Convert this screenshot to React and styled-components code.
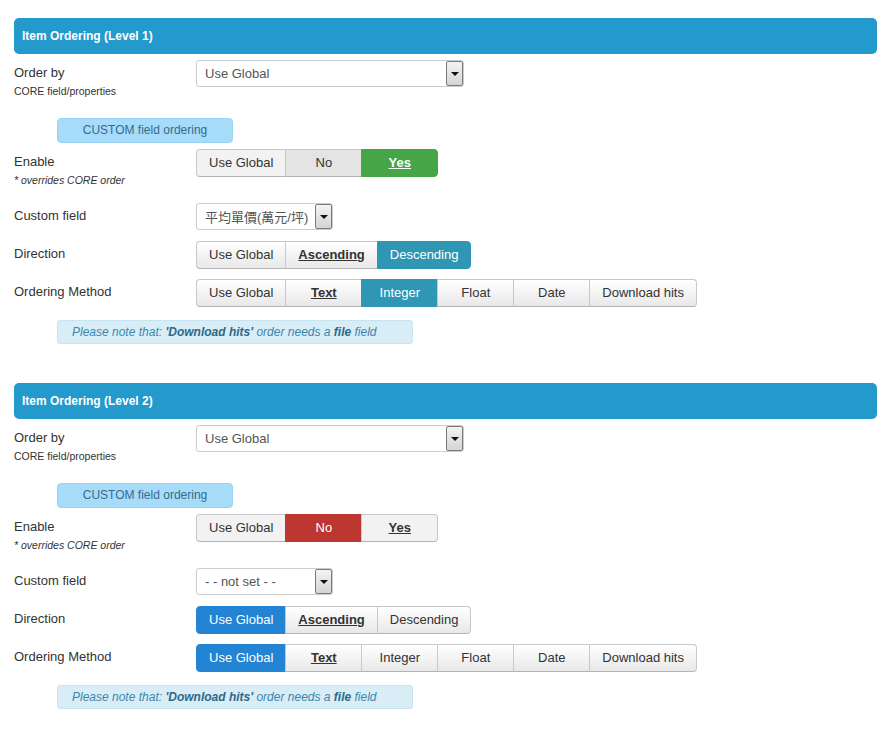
import styled, { createGlobalStyle } from "styled-components";

const GlobalStyle = createGlobalStyle`
  body {
    margin: 0;
    background: #fff;
    font-family: "Liberation Sans", Arial, sans-serif;
    color: #333;
  }
`;

const levels = [
  {
    title: "Item Ordering (Level 1)",
    enable: { active: "Yes", kind: "success", soft: "No" },
    customField: "平均單價(萬元/坪)",
    direction: { active: "Descending", kind: "info" },
    method: { active: "Integer", kind: "info" },
  },
  {
    title: "Item Ordering (Level 2)",
    enable: { active: "No", kind: "danger" },
    customField: "- - not set - -",
    direction: { active: "Use Global", kind: "primary" },
    method: { active: "Use Global", kind: "primary" },
  },
];

const activeColors = {
  success: "#46a546",
  danger: "#bd362f",
  info: "#2f96b4",
  primary: "#2384d3",
};

function ButtonGroup({ options, active, kind, flat, soft, bold = [] }) {
  return (
    <Group>
      {options.map((opt) => (
        <GroupButton
          key={opt}
          $active={opt === active ? activeColors[kind] : null}
          $flat={flat}
          $soft={opt === soft}
          $bold={bold.includes(opt)}
        >
          {opt}
        </GroupButton>
      ))}
    </Group>
  );
}

function Select({ value, width }) {
  return (
    <SelectBox $width={width}>
      <span>{value}</span>
      <Arrow />
    </SelectBox>
  );
}

function Section({ level }) {
  return (
    <Fieldset>
      <Header>{level.title}</Header>

      <Row $gap={20}>
        <Label>
          <LabelText>Order by</LabelText>
          <SubText>CORE field/properties</SubText>
        </Label>
        <Select value="Use Global" width={268} />
      </Row>

      <Badge>CUSTOM field ordering</Badge>

      <Row $gap={16}>
        <Label>
          <LabelText>Enable</LabelText>
          <SubText $italic>* overrides CORE order</SubText>
        </Label>
        <ButtonGroup
          options={["Use Global", "No", "Yes"]}
          active={level.enable.active}
          kind={level.enable.kind}
          soft={level.enable.soft}
          bold={["Yes"]}
          flat
        />
      </Row>

      <Row $gap={11}>
        <Label>
          <LabelText>Custom field</LabelText>
        </Label>
        <Select value={level.customField} width={137} />
      </Row>

      <Row $gap={10}>
        <Label>
          <LabelText>Direction</LabelText>
        </Label>
        <ButtonGroup
          options={["Use Global", "Ascending", "Descending"]}
          active={level.direction.active}
          kind={level.direction.kind}
          bold={["Ascending"]}
        />
      </Row>

      <Row $gap={13}>
        <Label>
          <LabelText>Ordering Method</LabelText>
        </Label>
        <ButtonGroup
          options={["Use Global", "Text", "Integer", "Float", "Date", "Download hits"]}
          active={level.method.active}
          kind={level.method.kind}
          bold={["Text"]}
        />
      </Row>

      <Note>
        Please note that: <b>'Download hits'</b> order needs a <b>file</b> field
      </Note>
    </Fieldset>
  );
}

export default function App() {
  return (
    <>
      <GlobalStyle />
      <Page>
        {levels.map((level) => (
          <Section key={level.title} level={level} />
        ))}
      </Page>
    </>
  );
}

const Page = styled.div`
  padding: 18px 5px 0 14px;
  display: flex;
  flex-direction: column;
  gap: 39px;
`;

const Fieldset = styled.section`
  display: flex;
  flex-direction: column;
`;

const Header = styled.div`
  height: 36px;
  background: #2399cc;
  border-radius: 5px;
  color: #fff;
  font-weight: bold;
  font-size: 12px;
  line-height: 36px;
  padding-left: 8px;
  margin-bottom: 6px;
`;

const Row = styled.div`
  display: flex;
  align-items: flex-start;
  margin-bottom: ${(p) => p.$gap}px;
`;

const Label = styled.div`
  width: 182px;
  flex: none;
  padding-top: 4px;
`;

const LabelText = styled.div`
  font-size: 13px;
  line-height: 18px;
  color: #333;
`;

const SubText = styled.div`
  font-size: 10.5px;
  line-height: 14px;
  margin-top: 2px;
  color: #333;
  font-style: ${(p) => (p.$italic ? "italic" : "normal")};
`;

const SelectBox = styled.div`
  box-sizing: border-box;
  width: ${(p) => p.$width}px;
  height: 27px;
  border: 1px solid #ccc;
  border-radius: 3px;
  background: #fff;
  display: flex;
  align-items: center;
  justify-content: space-between;
  padding-left: 8px;
  font-size: 13px;
  color: #555;
  font-family: "Liberation Sans", Arial, "Noto Sans CJK TC", sans-serif;

  span {
    white-space: nowrap;
    overflow: hidden;
  }
`;

const Arrow = styled.div`
  box-sizing: border-box;
  flex: none;
  width: 17px;
  height: 25px;
  border: 1px solid #7a7a7a;
  border-radius: 2px;
  background: linear-gradient(#f4f4f4, #d4d4d4);
  position: relative;

  &::after {
    content: "";
    position: absolute;
    left: 4px;
    top: 10px;
    border-left: 4px solid transparent;
    border-right: 4px solid transparent;
    border-top: 4px solid #111;
  }
`;

const Badge = styled.div`
  box-sizing: border-box;
  width: 176px;
  height: 25px;
  margin-left: 43px;
  margin-bottom: 6px;
  background: #a6dcf9;
  border: 1px solid #9ad3f2;
  border-radius: 4px;
  color: #356b8e;
  font-size: 12px;
  line-height: 23px;
  text-align: center;
`;

const Group = styled.div`
  display: flex;
`;

const GroupButton = styled.div`
  box-sizing: border-box;
  min-width: 77px;
  height: 28px;
  padding: 0 12px;
  font-size: 13px;
  line-height: 26px;
  text-align: center;
  white-space: nowrap;
  font-weight: ${(p) => (p.$bold ? "bold" : "normal")};
  text-decoration: ${(p) => (p.$bold ? "underline" : "none")};
  border: 1px solid ${(p) => (p.$active ? p.$active : "#c8c8c8")};
  border-bottom-color: ${(p) => (p.$active ? p.$active : "#b3b3b3")};
  margin-left: -1px;
  color: ${(p) => (p.$active ? "#fff" : "#333")};
  background: ${(p) =>
    p.$active
      ? p.$active
      : p.$soft
      ? "#e4e4e4"
      : p.$flat
      ? "#f2f2f2"
      : "linear-gradient(#ffffff, #e8e8e8)"};

  &:first-child {
    margin-left: 0;
    border-radius: 4px 0 0 4px;
  }

  &:last-child {
    border-radius: 0 4px 4px 0;
  }
`;

const Note = styled.div`
  box-sizing: border-box;
  width: 356px;
  height: 24px;
  margin-left: 43px;
  background: #d9edf7;
  border: 1px solid #c6e4f2;
  border-radius: 3px;
  color: #3a87ad;
  font-size: 12px;
  font-style: italic;
  line-height: 22px;
  padding-left: 14px;

  b {
    color: #2d6987;
  }
`;
